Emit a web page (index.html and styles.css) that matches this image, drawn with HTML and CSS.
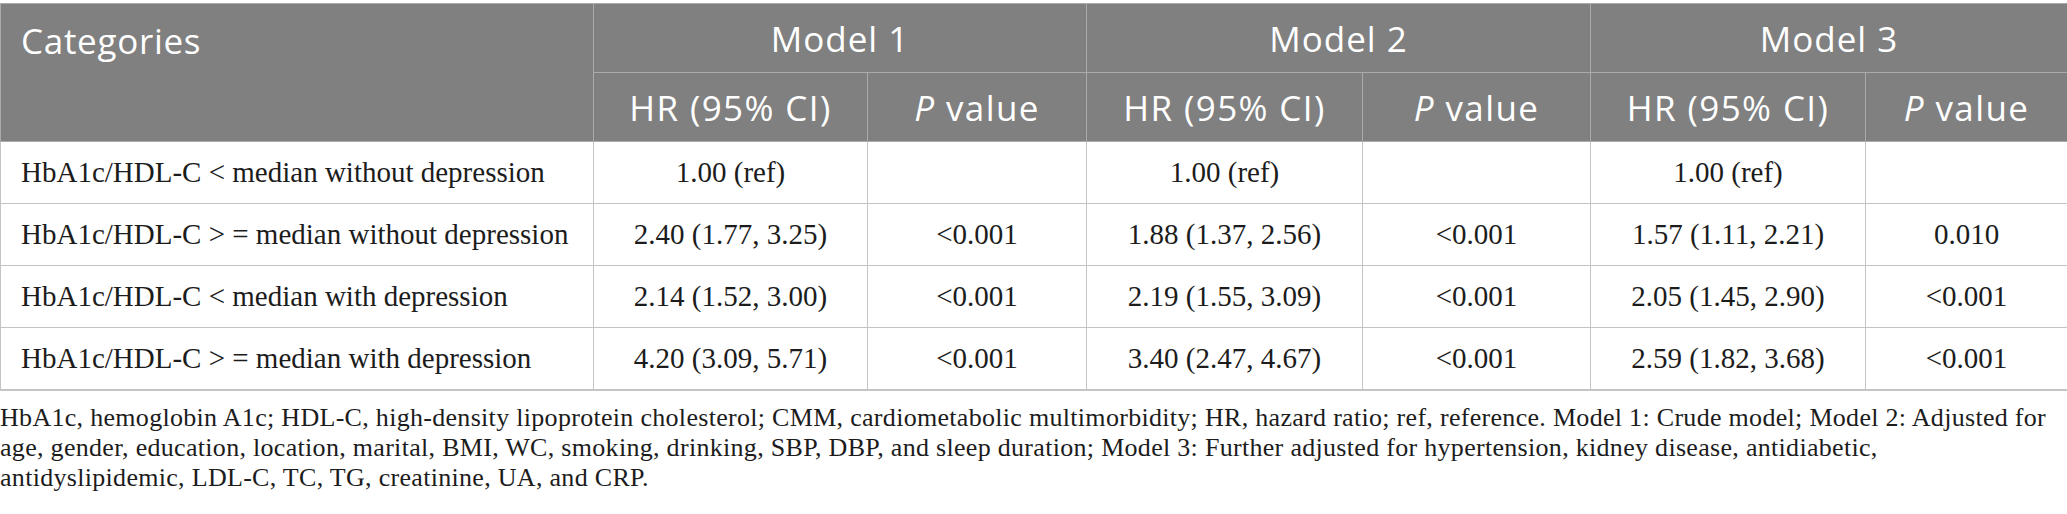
FILE: index.html
```html
<!DOCTYPE html>
<html lang="en">
<head>
<meta charset="utf-8">
<title>Table</title>
<link rel="stylesheet" href="styles.css">
</head>
<body>
<div class="wrap">
<table class="data">
<colgroup>
<col class="c-cat"><col class="c-hr1"><col class="c-p1"><col class="c-hr2"><col class="c-p2"><col class="c-hr3"><col class="c-p3">
</colgroup>
<thead>
<tr class="h1">
<th rowspan="2" class="cat">Categories</th>
<th colspan="2">Model 1</th>
<th colspan="2">Model 2</th>
<th colspan="2">Model 3</th>
</tr>
<tr class="h2">
<th>HR (95% CI)</th><th><i>P</i> value</th>
<th>HR (95% CI)</th><th><i>P</i> value</th>
<th>HR (95% CI)</th><th><i>P</i> value</th>
</tr>
</thead>
<tbody>
<tr><td class="cat">HbA1c/HDL-C &lt; median without depression</td><td>1.00 (ref)</td><td></td><td>1.00 (ref)</td><td></td><td>1.00 (ref)</td><td></td></tr>
<tr><td class="cat">HbA1c/HDL-C &gt; = median without depression</td><td>2.40 (1.77, 3.25)</td><td>&lt;0.001</td><td>1.88 (1.37, 2.56)</td><td>&lt;0.001</td><td>1.57 (1.11, 2.21)</td><td>0.010</td></tr>
<tr><td class="cat">HbA1c/HDL-C &lt; median with depression</td><td>2.14 (1.52, 3.00)</td><td>&lt;0.001</td><td>2.19 (1.55, 3.09)</td><td>&lt;0.001</td><td>2.05 (1.45, 2.90)</td><td>&lt;0.001</td></tr>
<tr class="last"><td class="cat">HbA1c/HDL-C &gt; = median with depression</td><td>4.20 (3.09, 5.71)</td><td>&lt;0.001</td><td>3.40 (2.47, 4.67)</td><td>&lt;0.001</td><td>2.59 (1.82, 3.68)</td><td>&lt;0.001</td></tr>
</tbody>
</table>
<p class="note">HbA1c, hemoglobin A1c; HDL-C, high-density lipoprotein cholesterol; CMM, cardiometabolic multimorbidity; HR, hazard ratio; ref, reference. Model 1: Crude model; Model 2: Adjusted for<br>age, gender, education, location, marital, BMI, WC, smoking, drinking, SBP, DBP, and sleep duration; Model 3: Further adjusted for hypertension, kidney disease, antidiabetic,<br>antidyslipidemic, LDL-C, TC, TG, creatinine, UA, and CRP.</p>
</div>
</body>
</html>
```
FILE: styles.css
```css
html, body {
  margin: 0;
  padding: 0;
  background: #ffffff;
}
.wrap {
  width: 2067px;
  padding-top: 3px;
}
.data {
  width: 2067px;
  border-collapse: collapse;
  table-layout: fixed;
  border: 1px solid #c4c4c4;
  border-bottom: 2px solid #c4c4c4;
}
.c-cat { width: 593px; }
.c-hr1 { width: 274px; }
.c-p1 { width: 219px; }
.c-hr2 { width: 276px; }
.c-p2 { width: 228px; }
.c-hr3 { width: 275px; }
.c-p3 { width: 202px; }
.data th {
  background: #7f807f;
  color: #ffffff;
  font-family: "Open Sans", "Noto Sans", sans-serif;
  font-weight: 400;
  font-size: 35px;
  text-align: center;
  border: 1px solid #a9aaa9;
  padding: 0 10px;
  white-space: nowrap;
}
.h1 th { height: 68px; letter-spacing: 1px; }
.h2 th { height: 68px; letter-spacing: 1.4px; }
.data th.cat {
  text-align: left;
  vertical-align: top;
  padding: 13px 0 0 20px;
  letter-spacing: 0.7px;
}
.data th i { font-style: italic; }
.data td {
  font-family: "Liberation Serif", "Times New Roman", serif;
  font-size: 29px;
  color: #1c1c1c;
  text-align: center;
  border: 1px solid #c4c4c4;
  height: 61px;
  padding: 0 10px;
  white-space: nowrap;
}
.data td.cat {
  text-align: left;
  padding-left: 20px;
}
.note {
  margin: 12px 0 0 0;
  font-family: "Liberation Serif", "Times New Roman", serif;
  font-size: 26px;
  letter-spacing: 0.3px;
  line-height: 30px;
  color: #1c1c1c;
  white-space: nowrap;
}
```
